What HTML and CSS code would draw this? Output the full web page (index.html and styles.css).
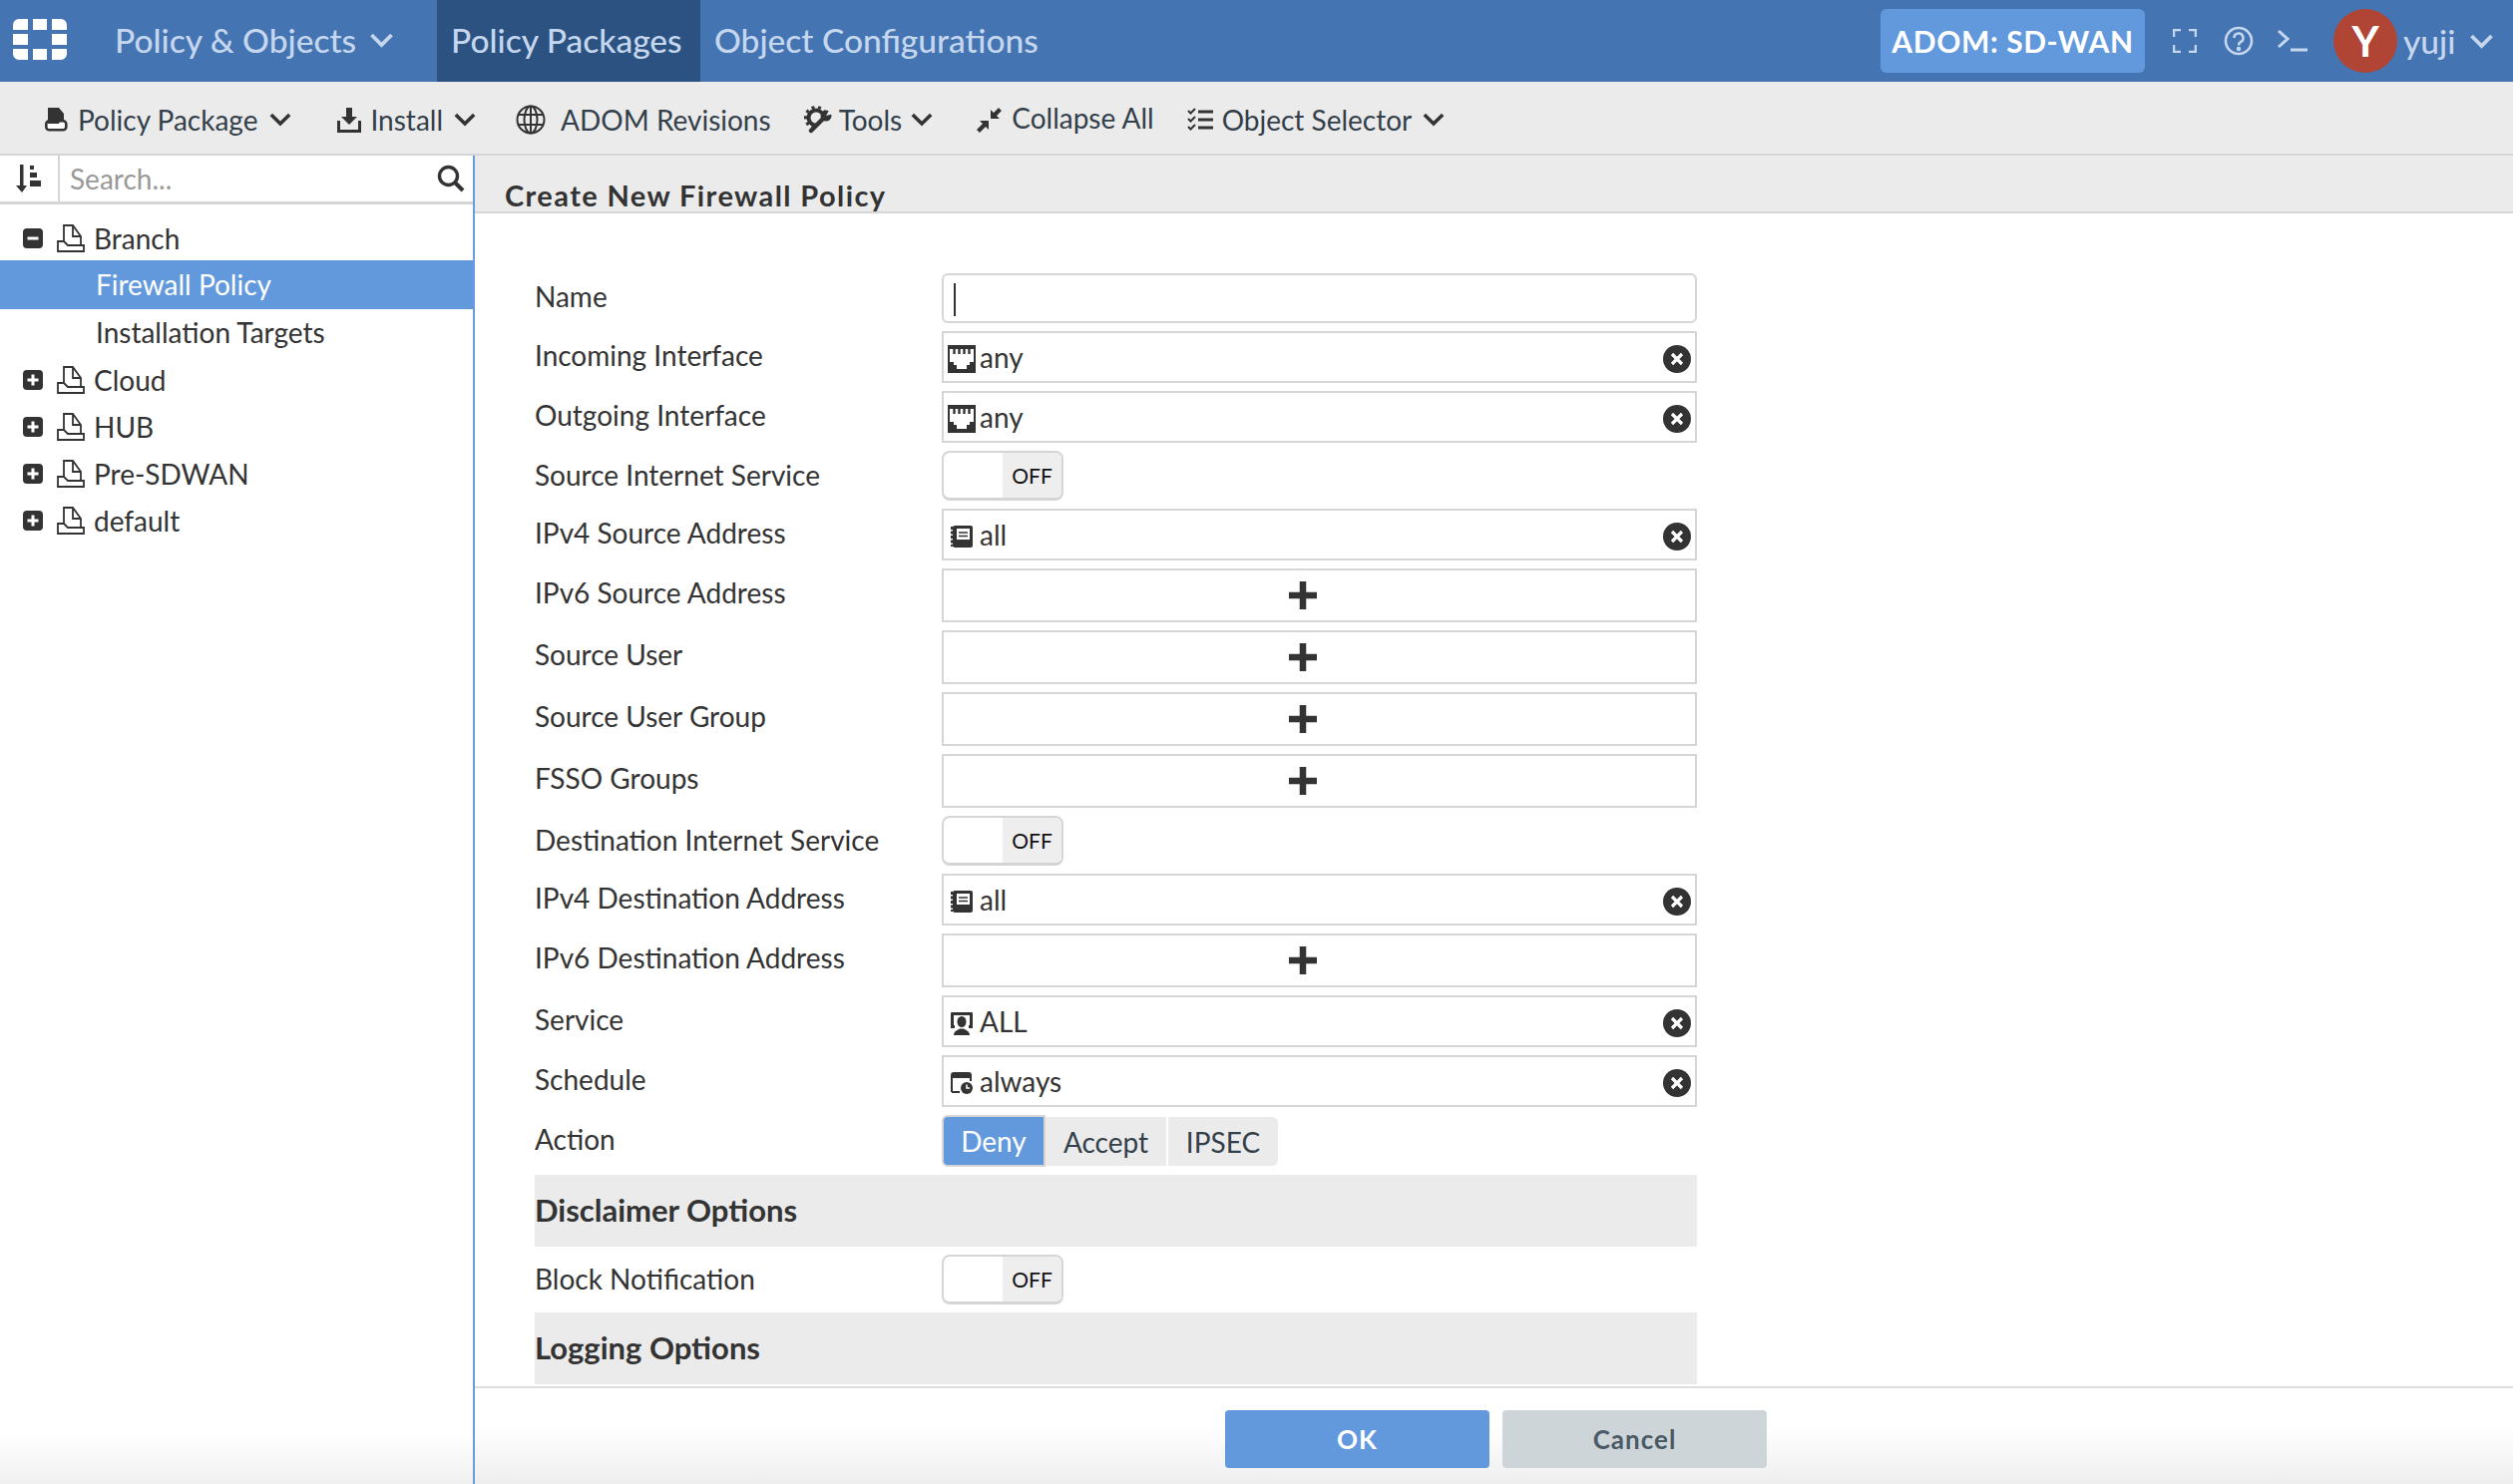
FILE: index.html

```html
<!DOCTYPE html>
<html lang="en">
<head>
  <meta charset="UTF-8" />
  <title>Create New Firewall Policy</title>
  <link rel="stylesheet" href="styles.css">
</head>
<body>
  <svg class="defs" width="0" height="0">
    <symbol id="chev" viewBox="0 0 24 16"><path d="M2 3l10 10L22 3" fill="none" stroke="currentColor" stroke-width="3.8"/></symbol>
    <symbol id="pkg" viewBox="0 0 28 28"><path d="M7 18V1h9l8 11v9M16 1v11h8M7 17H1v10h26v-6H11z" fill="#fff" stroke="#333" stroke-width="1.8"/></symbol>
    <symbol id="plusbox" viewBox="0 0 20 20"><rect width="20" height="20" rx="4" fill="#333"/><path d="M10 4.5v11M4.5 10h11" stroke="#fff" stroke-width="3"/></symbol>
    <symbol id="minusbox" viewBox="0 0 20 20"><rect width="20" height="20" rx="4" fill="#333"/><path d="M4.5 10h11" stroke="#fff" stroke-width="3"/></symbol>
    <symbol id="port" viewBox="0 0 28 28"><rect width="28" height="28" fill="#333"/><path d="M2 4h24v13h-4v3h-3v4H9v-4H6v-3H2z" fill="#fff"/><path d="M6.500 4v5M11.500 4v5M16.500 4v5M21.500 4v5" stroke="#333" stroke-width="2.400"/></symbol>
    <symbol id="book" viewBox="0 0 22 22"><rect x="2" y="0" width="20" height="22" rx="2" fill="#333"/><rect x="6" y="3" width="13" height="11" fill="#fff"/><path d="M8 7h9M8 10.500h9" stroke="#333" stroke-width="1.600"/><path d="M1 1v20" stroke="#333" stroke-width="2" stroke-dasharray="3 1.500"/></symbol>
    <symbol id="clear" viewBox="0 0 28 28"><circle cx="14" cy="14" r="14" fill="#333"/><path d="M9 9l10 10M19 9L9 19" stroke="#fff" stroke-width="3.2"/></symbol>
    <symbol id="plus" viewBox="0 0 30 30"><path d="M15 1v28M1 15h28" stroke="#333" stroke-width="6.5"/></symbol>
  </svg>

  <header class="topbar">
    <svg class="logo" width="54" height="41" viewBox="0 0 54 41" fill="#fff">
      <path d="M6 0h9v11H0V6a6 6 0 0 1 6-6zM20 0h14v11H20zM39 0h9a6 6 0 0 1 6 6v5H39zM0 15h15v11H0zM39 15h15v11H39zM0 30h15v11H6a6 6 0 0 1-6-6zM20 30h14v11H20zM39 30h15v5a6 6 0 0 1-6 6h-9z"/>
    </svg>
    <div class="nav-item nav-main">Policy &amp; Objects <svg class="chev" width="25" height="16"><use href="#chev"/></svg></div>
    <div class="nav-item nav-active">Policy Packages</div>
    <div class="nav-item">Object Configurations</div>
    <div class="top-right">
      <div class="adom">ADOM: SD-WAN</div>
      <svg class="top-icon fullscreen" width="24" height="24" viewBox="0 0 24 24" fill="none" stroke="currentColor" stroke-width="2.6"><path d="M1 8V1h7M16 1h7v7M23 16v7h-7M8 23H1v-7"/></svg>
      <svg class="top-icon help" width="30" height="30" viewBox="0 0 30 30" fill="none" stroke="currentColor" stroke-width="2.6"><circle cx="15" cy="15" r="13"/><path d="M10.500 12a4.500 4.500 0 1 1 6.500 4c-1.500.8-2 1.600-2 3.500"/><circle cx="15" cy="23" r="1" fill="currentColor"/></svg>
      <svg class="top-icon term" width="30" height="24" viewBox="0 0 30 24" fill="none" stroke="currentColor" stroke-width="3"><path d="M1 2l9 8-9 8M13 21h17"/></svg>
      <div class="avatar">Y</div>
      <span class="user">yuji</span>
      <svg class="chev" width="25" height="16"><use href="#chev"/></svg>
    </div>
  </header>

  <nav class="toolbar">
    <div class="tool tool-pkg">
      <svg width="24" height="24" viewBox="0 0 24 24"><rect x="2.300" y="13.300" width="20" height="9" rx="3" fill="#fff" stroke="#333" stroke-width="2.600"/><path d="M4 0h11l5 6v8h-3q-2 0-2 2H4z" fill="#333"/></svg>
      <span>Policy Package</span><svg class="tool-chev" width="22" height="15"><use href="#chev"/></svg>
    </div>
    <div class="tool tool-install">
      <svg width="24" height="26" viewBox="0 0 24 26" fill="#333"><path d="M9 1h6v9h5l-8 8-8-8h5z"/><path d="M1.500 14v10.500h21V14" fill="none" stroke="#333" stroke-width="3"/></svg>
      <span>Install</span><svg class="tool-chev" width="22" height="15"><use href="#chev"/></svg>
    </div>
    <div class="tool tool-adom">
      <svg width="30" height="30" viewBox="0 0 30 30" fill="none" stroke="#333" stroke-width="2"><circle cx="15" cy="15" r="13.500"/><ellipse cx="15" cy="15" rx="6.500" ry="13.500"/><path d="M15 1.500v27M2 10h26M2 20h26"/></svg>
      <span>ADOM Revisions</span>
    </div>
    <div class="tool tool-tools">
      <svg width="28" height="28" viewBox="0 0 28 28" fill="none" stroke="#333">
        <circle cx="12" cy="12" r="7.500" stroke-width="4" stroke-dasharray="34 13.100" transform="rotate(100 12 12)"/>
        <circle cx="12" cy="12" r="10.500" stroke-width="3" stroke-dasharray="3 3.600 3 3.600 3 3.600 3 3.600 3 3.600 3 3.600 3 24.400" transform="rotate(100 12 12)"/>
        <path d="M7 25l12-12" stroke-width="4.500" stroke-linecap="round"/>
        <circle cx="22" cy="10" r="5.500" fill="#333" stroke="none"/>
        <path d="M22 10l4-7 4 5z" fill="#ebebeb" stroke="none"/>
      </svg>
      <span>Tools</span><svg class="tool-chev" width="22" height="15"><use href="#chev"/></svg>
    </div>
    <div class="tool tool-collapse">
      <svg width="26" height="26" viewBox="0 0 26 26" fill="#333"><path d="M14 3v9h9l-3-3 5-5-3-3-5 5zM12 14v9l-3-3-6 6-3-3 6-6-3-3z"/></svg>
      <span class="collapse-text">Collapse All</span>
    </div>
    <div class="tool tool-selector">
      <svg width="26" height="24" viewBox="0 0 26 24" fill="none" stroke="#333" stroke-width="2"><path d="M1 3l2.500 2.500L8 1M1 11l2.500 2.500L8 9M1 19l2.500 2.500L8 17"/><path d="M11 4h15M11 12h15M11 20h15" stroke-width="3"/></svg>
      <span>Object Selector</span><svg class="tool-chev" width="22" height="15"><use href="#chev"/></svg>
    </div>
  </nav>

  <div class="main">
    <aside class="sidebar">
      <div class="search-row">
        <div class="sort-cell">
          <svg width="28" height="28" viewBox="0 0 28 28" fill="#333"><path d="M6 0h3.500v21H13l-5 7-6-7h4z"/><path d="M16 1h4v4h-4zM16 8h7v5h-7zM16 16h11v6H16z"/></svg>
        </div>
        <div class="search-text">Search...</div>
        <svg class="search-icon" width="28" height="28" viewBox="0 0 28 28" fill="none" stroke="#333"><circle cx="11.500" cy="11.500" r="9" stroke-width="3.400"/><path d="M18 18l8 8" stroke-width="4"/></svg>
      </div>
      <ul class="tree">
        <li class="tree-row"><svg class="box" width="20" height="20"><use href="#minusbox"/></svg><svg class="pkg" width="28" height="28"><use href="#pkg"/></svg><span>Branch</span></li>
        <li class="tree-row tree-child tree-selected"><span>Firewall Policy</span></li>
        <li class="tree-row tree-child tree-targets"><span>Installation Targets</span></li>
        <li class="tree-row"><svg class="box" width="20" height="20"><use href="#plusbox"/></svg><svg class="pkg" width="28" height="28"><use href="#pkg"/></svg><span>Cloud</span></li>
        <li class="tree-row"><svg class="box" width="20" height="20"><use href="#plusbox"/></svg><svg class="pkg" width="28" height="28"><use href="#pkg"/></svg><span>HUB</span></li>
        <li class="tree-row"><svg class="box" width="20" height="20"><use href="#plusbox"/></svg><svg class="pkg" width="28" height="28"><use href="#pkg"/></svg><span>Pre-SDWAN</span></li>
        <li class="tree-row"><svg class="box" width="20" height="20"><use href="#plusbox"/></svg><svg class="pkg" width="28" height="28"><use href="#pkg"/></svg><span>default</span></li>
      </ul>
    </aside>

    <section class="panel">
      <h1 class="panel-title">Create New Firewall Policy</h1>
      <div class="form">
        <div class="row row-name">
          <label>Name</label>
          <div class="input"><i class="caret"></i></div>
        </div>
        <div class="row">
          <label>Incoming Interface</label>
          <div class="field"><svg width="28" height="28"><use href="#port"/></svg><span>any</span><svg class="clear" width="28" height="28"><use href="#clear"/></svg></div>
        </div>
        <div class="row">
          <label>Outgoing Interface</label>
          <div class="field"><svg width="28" height="28"><use href="#port"/></svg><span>any</span><svg class="clear" width="28" height="28"><use href="#clear"/></svg></div>
        </div>
        <div class="row row-toggle">
          <label>Source Internet Service</label>
          <div class="toggle"><b>OFF</b></div>
        </div>
        <div class="row">
          <label>IPv4 Source Address</label>
          <div class="field"><svg class="ico-small" width="22" height="22"><use href="#book"/></svg><span>all</span><svg class="clear" width="28" height="28"><use href="#clear"/></svg></div>
        </div>
        <div class="row row-add">
          <label>IPv6 Source Address</label>
          <div class="field field-add"><svg width="30" height="30"><use href="#plus"/></svg></div>
        </div>
        <div class="row row-add">
          <label>Source User</label>
          <div class="field field-add"><svg width="30" height="30"><use href="#plus"/></svg></div>
        </div>
        <div class="row row-add">
          <label>Source User Group</label>
          <div class="field field-add"><svg width="30" height="30"><use href="#plus"/></svg></div>
        </div>
        <div class="row row-add">
          <label>FSSO Groups</label>
          <div class="field field-add"><svg width="30" height="30"><use href="#plus"/></svg></div>
        </div>
        <div class="row row-toggle">
          <label>Destination Internet Service</label>
          <div class="toggle"><b>OFF</b></div>
        </div>
        <div class="row">
          <label>IPv4 Destination Address</label>
          <div class="field"><svg class="ico-small" width="22" height="22"><use href="#book"/></svg><span>all</span><svg class="clear" width="28" height="28"><use href="#clear"/></svg></div>
        </div>
        <div class="row row-add">
          <label>IPv6 Destination Address</label>
          <div class="field field-add"><svg width="30" height="30"><use href="#plus"/></svg></div>
        </div>
        <div class="row">
          <label>Service</label>
          <div class="field">
            <svg class="ico-small" width="22" height="23" viewBox="0 0 22 23" fill="#333"><path d="M1 0h20a1 1 0 0 1 1 1v15h-4v-3h1V3H3v10h1v3H0V1a1 1 0 0 1 1-1z"/><ellipse cx="11" cy="9.500" rx="4.500" ry="5.500"/><path d="M3 23c0-4 4-5.500 6-6.500h4c2 1 6 2.500 6 6.500z"/></svg>
            <span>ALL</span><svg class="clear" width="28" height="28"><use href="#clear"/></svg>
          </div>
        </div>
        <div class="row">
          <label>Schedule</label>
          <div class="field">
            <svg class="ico-small" width="22" height="22" viewBox="0 0 22 22"><path d="M1 20V3a2 2 0 0 1 2-2h15a2 2 0 0 1 2 2v6" fill="none" stroke="#333" stroke-width="2"/><path d="M1 2h19v4H1zM1 19h8v2H1z" fill="#333"/><circle cx="16" cy="16" r="6" fill="#333"/><path d="M16 12.500V16h3" fill="none" stroke="#fff" stroke-width="1.500"/></svg>
            <span>always</span><svg class="clear" width="28" height="28"><use href="#clear"/></svg>
          </div>
        </div>
        <div class="row row-action">
          <label>Action</label>
          <div class="btn-group">
            <div class="seg seg-on">Deny</div>
            <div class="seg seg-accept">Accept</div>
            <div class="seg seg-ipsec">IPSEC</div>
          </div>
        </div>
        <div class="section">Disclaimer Options</div>
        <div class="row row-toggle">
          <label>Block Notification</label>
          <div class="toggle"><b>OFF</b></div>
        </div>
        <div class="section">Logging Options</div>
      </div>
      <footer class="footer">
        <div class="btn btn-ok">OK</div>
        <div class="btn btn-cancel">Cancel</div>
      </footer>
    </section>
  </div>
</body>
</html>
```

FILE: styles.css

```css
* { box-sizing: border-box; }
html, body { height: 100%; }
body { margin: 0; height: 1488px; overflow: hidden; display: flex; flex-direction: column; font-family: Lato, "Open Sans", sans-serif; font-size: 28px; color: #333; background: #fff; }
.defs { position: absolute; }
ul { list-style: none; margin: 0; padding: 0; }

/* top bar */
.topbar { height: 82px; flex: none; display: flex; align-items: stretch; background: #4474b2; color: #c5d7ee; font-size: 33.5px; font-weight: 500; }
.logo { margin: 19px 0 0 13px; flex: none; }
.nav-item { display: flex; align-items: center; padding: 0 14px 3px; }
.nav-main { margin-left: 34px; width: 337px; gap: 13px; }
.nav-active { background: #2c5282; width: 264px; }
.chev { color: inherit; flex: none; }
.top-right { margin-left: auto; display: flex; align-items: center; padding-right: 19px; }
.adom { width: 265px; height: 64px; border-radius: 6px; background: #6299dd; color: #fff; display: flex; align-items: center; justify-content: center; font-weight: 700; font-size: 30px; letter-spacing: .6px; }
.top-icon { flex: none; }
.fullscreen { margin-left: 28px; }
.help { margin-left: 27px; }
.term { margin-left: 24px; }
.avatar { width: 64px; height: 64px; border-radius: 50%; background: #b04535; color: #fff; margin-left: 26px; display: flex; align-items: center; justify-content: center; font-size: 42px; font-weight: 700; }
.user { margin-left: 6px; width: 66px; }

/* toolbar */
.toolbar { height: 74px; flex: none; display: flex; align-items: center; padding-top: 3px; background: #ebebeb; border-bottom: 2px solid #d5d5d5; color: #333f4a; }
.tool { display: flex; align-items: center; flex: none; }
.tool-chev { margin-left: 2px; color: #333; }
.tool-pkg { margin-left: 44px; gap: 10px; }
.tool-install { margin-left: 46px; gap: 9px; }
.tool-adom { margin-left: 40px; gap: 15px; }
.tool-tools { margin-left: 33px; gap: 7px; }
.tool-collapse { margin-left: 44px; gap: 9px; }
.collapse-text { margin-top: -4px; }
.tool-selector { margin-left: 33px; gap: 9px; }

/* left tree */
.main { flex: 1; display: flex; min-height: 0; }
.sidebar { width: 476px; flex: none; border-right: 2px solid #6b9bdc; background: linear-gradient(#fff calc(100% - 50px), #f0f0f0); }
.search-row { height: 49px; display: flex; align-items: center; border-bottom: 3px solid #d5d5d5; }
.sort-cell { width: 60px; height: 100%; display: flex; align-items: center; padding-left: 14px; border-right: 2px solid #d5d5d5; }
.search-text { flex: 1; padding-left: 10px; color: #999; }
.search-icon { margin-right: 8px; }
.tree { padding-top: 10px; }
.tree-row { height: 47px; display: flex; align-items: center; padding-left: 23px; }
.tree-row:first-child { height: 46px; padding-top: 2px; }
.tree-selected { height: 49px; padding-bottom: 2px; background: #6299dd; color: #fff; }
.tree-child { padding-left: 96px; }
.tree-targets { padding-bottom: 2px; }
.pkg { margin-left: 14px; margin-right: 9px; }

/* form panel */
.panel { flex: 1; min-width: 0; display: flex; flex-direction: column; }
.panel-title { margin: 0; height: 58px; flex: none; padding: 23px 0 0 30px; background: #ebebeb; border-bottom: 2px solid #d5d5d5; font-size: 29px; line-height: 33px; font-weight: 700; color: #333; letter-spacing: 1.4px; }
.form { flex: 1; min-height: 0; overflow: hidden; padding: 60px 0 0 60px; width: 1225px; display: flex; flex-direction: column; gap: 8px; }
.row { display: flex; align-items: center; height: 52px; flex: none; }
.row label { width: 408px; flex: none; margin-top: -4px; }
.row-name { height: 50px; }
.row-toggle { height: 50px; }
.row-toggle label { margin-top: -2px; }
.row-add { height: 54px; }
.row-add label { margin-top: -6px; }
.input { flex: 1; height: 100%; border: 2px solid #d5d5d5; border-radius: 6px; padding: 8px 10px; }
.caret { display: block; width: 2px; height: 33px; background: #333; }
.field { flex: 1; height: 100%; border: 2px solid #d5d5d5; display: flex; align-items: center; padding: 0 4px; gap: 4px; }
.field svg { margin-top: 4px; }
.field .clear { margin-left: auto; }
.field-add svg { margin-top: 0; }
.ico-small { margin: 0 3px 0 3px; }
.field-add { justify-content: center; padding-right: 38px; }
.toggle { width: 122px; height: 100%; border: 2px solid #d5d5d5; border-bottom-width: 3px; border-radius: 8px; display: flex; justify-content: flex-end; overflow: hidden; }
.toggle b { width: 59px; background: #eee; color: #111; font-weight: 400; font-size: 21px; display: flex; align-items: center; justify-content: center; }
.btn-group { display: flex; height: 100%; gap: 2px; }
.seg { display: flex; align-items: center; justify-content: center; background: #ebebeb; color: #333f4a; }
.seg-on { width: 104px; background: #6299dd; color: #fff; border: 2px solid #d5d5d5; border-radius: 6px 0 0 6px; margin-right: -2px; }
.seg-accept { width: 121px; height: 49px; margin-top: 2px; }
.seg-ipsec { width: 110px; height: 49px; margin-top: 2px; border-radius: 0 6px 6px 0; }
.section { height: 72px; flex: none; background: #ebebeb; display: flex; align-items: center; padding-bottom: 2px; font-size: 31px; font-weight: 700; }

/* bottom buttons */
.footer { height: 98px; flex: none; border-top: 2px solid #ddd; display: flex; justify-content: center; gap: 13px; padding: 22px 0 0 4px; background: linear-gradient(#fff 40%, #eee); }
.btn { width: 265px; height: 58px; border-radius: 4px; display: flex; align-items: center; justify-content: center; font-size: 26px; font-weight: 700; letter-spacing: 1px; }
.btn-ok { background: #6299dd; color: #fff; }
.btn-cancel { background: #ced5d9; color: #4a5a66; }
```
